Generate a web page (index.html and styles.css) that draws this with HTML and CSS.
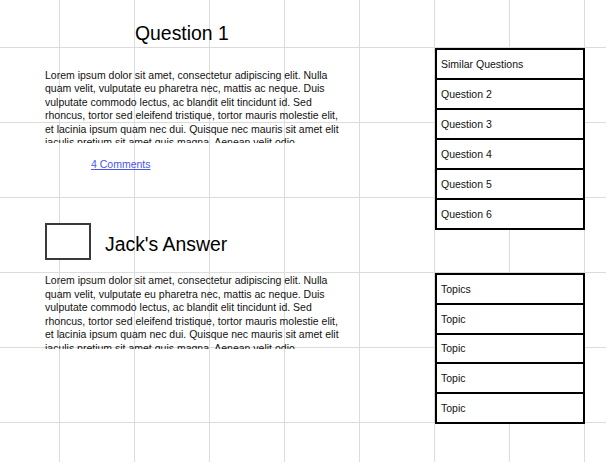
FILE: index.html
```html
<!DOCTYPE html>
<html lang="en">
<head>
<meta charset="utf-8">
<title>Question 1</title>
<link rel="stylesheet" href="styles.css">
</head>
<body>
<div class="page">
  <main class="main">
    <h1 class="title">Question 1</h1>
    <p class="body-text">Lorem ipsum dolor sit amet, consectetur adipiscing elit. Nulla quam velit, vulputate eu pharetra nec, mattis ac neque. Duis vulputate commodo lectus, ac blandit elit tincidunt id. Sed rhoncus, tortor sed eleifend tristique, tortor mauris molestie elit, et lacinia ipsum quam nec dui. Quisque nec mauris sit amet elit iaculis pretium sit amet quis magna. Aenean velit odio, elementum in tempus ut, vehicula eu diam. Pellentesque rhoncus aliquam mattis.</p>
    <a class="comments" href="#">4 Comments</a>
    <div class="answer-head">
      <div class="avatar"></div>
      <h2 class="answer-title">Jack's Answer</h2>
    </div>
    <p class="body-text answer-text">Lorem ipsum dolor sit amet, consectetur adipiscing elit. Nulla quam velit, vulputate eu pharetra nec, mattis ac neque. Duis vulputate commodo lectus, ac blandit elit tincidunt id. Sed rhoncus, tortor sed eleifend tristique, tortor mauris molestie elit, et lacinia ipsum quam nec dui. Quisque nec mauris sit amet elit iaculis pretium sit amet quis magna. Aenean velit odio, elementum in tempus ut, vehicula eu diam. Pellentesque rhoncus aliquam mattis.</p>
  </main>
  <aside class="side">
    <ul class="list similar">
      <li>Similar Questions</li>
      <li>Question 2</li>
      <li>Question 3</li>
      <li>Question 4</li>
      <li>Question 5</li>
      <li>Question 6</li>
    </ul>
    <ul class="list topics">
      <li>Topics</li>
      <li>Topic</li>
      <li>Topic</li>
      <li>Topic</li>
      <li>Topic</li>
    </ul>
  </aside>
</div>
</body>
</html>
```

FILE: styles.css
```css
html {
  height: 100%;
  background-color: #ffffff;
  background-image:
    linear-gradient(to right, #dcdcdc 1px, transparent 1px),
    linear-gradient(to bottom, #dcdcdc 1px, transparent 1px);
  background-size: 75px 75px;
  background-position: 59px 47px;
}

body {
  margin: 0;
  font-family: "Liberation Sans", Arial, sans-serif;
  color: #111;
}

.page {
  display: flex;
  width: 606px;
}

.main {
  width: 435px;
  display: flex;
  flex-direction: column;
  align-items: flex-start;
}

.title {
  margin: 21.6px 0 0 135px;
  font-size: 19.4px;
  line-height: 22px;
  font-weight: normal;
  color: #000;
}

.body-text {
  margin: 25px 0 0 45px;
  width: 300px;
  height: 74.5px;
  overflow: hidden;
  font-size: 10.5px;
  line-height: 13.58px;
}

.comments {
  margin: 15.4px 0 0 91px;
  font-size: 10.5px;
  line-height: 12px;
  color: #4a55f2;
}

.answer-head {
  margin: 52.6px 0 0 45px;
  display: flex;
  align-items: flex-start;
}

.avatar {
  width: 42px;
  height: 33px;
  border: 2px solid #3a3a3a;
  background: #fff;
}

.answer-title {
  margin: 10px 0 0 14px;
  font-size: 19.4px;
  line-height: 22px;
  font-weight: normal;
  color: #000;
}

.answer-text {
  margin-top: 14px;
}

.side {
  width: 150px;
  display: flex;
  flex-direction: column;
}

.list {
  list-style: none;
  margin: 0;
  padding: 0;
  border: 2px solid #000;
  background: #fff;
}

.list li {
  height: 28px;
  display: flex;
  align-items: center;
  padding-left: 4px;
  font-size: 10.5px;
  color: #111;
}

.list li + li {
  border-top: 2px solid #000;
}

.similar {
  margin-top: 48px;
}

.topics {
  margin-top: 43px;
}

.topics li {
  height: 27.8px;
}
```
